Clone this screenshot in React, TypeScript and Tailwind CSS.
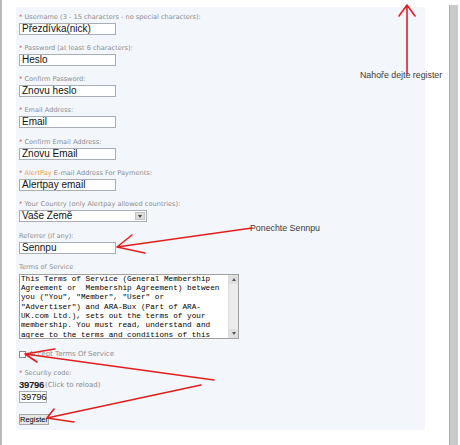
import React from "react";

const label = "font-['DejaVu_Sans',sans-serif] text-[6.6px] leading-[9px] text-[#8d8d8d] whitespace-nowrap";
const input =
  "mt-[1px] h-[12px] border border-[#a7aeb8] bg-white pl-[2px] font-['Liberation_Sans',Arial,sans-serif] text-[10px] leading-[10px] text-[#111] whitespace-nowrap overflow-hidden";

function Star() {
  return <span className="text-[#c65b5b]">* </span>;
}

function Field({ title, value, req = true }: { title: React.ReactNode; value: string; req?: boolean }) {
  return (
    <div className="mb-[9.3px]">
      <div className={label}>
        {req && <Star />}
        {title}
      </div>
      <div className={input + " w-[97px]"}>{value}</div>
    </div>
  );
}

const terms = [
  "This Terms of Service (General Membership",
  "Agreement or  Membership Agreement) between",
  'you ("You", "Member", "User" or',
  '"Advertiser") and ARA-Bux (Part of ARA-',
  "UK.com Ltd.), sets out the terms of your",
  "membership. You must read, understand and",
  "agree to the terms and conditions of this",
];

function App() {
  return (
    <div className="relative w-[460px] h-[445px] bg-white overflow-hidden flex items-start border-l-2 border-[#bababa]">
      <div className="mt-[7px] ml-[14px] w-[409px] h-[423px] bg-[#f3f6fb] pl-[3px] pt-[5.5px]">
        <Field title="Username (3 - 15 characters - no special characters):" value="Přezdívka(nick)" />
        <Field title="Password (at least 6 characters):" value="Heslo" />
        <Field title="Confirm Password:" value="Znovu heslo" />
        <Field title="Email Address:" value="Email" />
        <Field title="Confirm Email Address:" value="Znovu Email" />
        <Field
          title={
            <>
              <span className="text-[#eea444]">AlertPay</span> E-mail Address For Payments:
            </>
          }
          value="Alertpay email"
        />
        <div className="mb-[9.3px]">
          <div className={label}>
            <Star />
            Your Country (only Alertpay allowed countries):
          </div>
          <div className="mt-[1px] h-[12px] w-[128px] flex border border-[#a7aeb8] bg-white">
            <div className="flex-1 pl-[2px] font-['Liberation_Sans',Arial,sans-serif] text-[10px] leading-[10px] text-[#111]">
              Vaše Země
            </div>
            <div className="w-[10px] m-[1px] bg-[#dcdcdc] border border-[#c4c4c4] flex items-center justify-center">
              <div className="w-0 h-0 border-l-[2px] border-r-[2px] border-t-[3px] border-l-transparent border-r-transparent border-t-[#444]" />
            </div>
          </div>
        </div>
        <Field title="Referrer (if any):" value="Sennpu" req={false} />
        <div className={label}>Terms of Service</div>
        <div className="mt-[2px] w-[220px] h-[65px] flex border border-[#a0a0a0] bg-white">
          <div className="flex-1 overflow-hidden pl-[1px] font-['Liberation_Mono','Courier_New',monospace] text-[7.7px] leading-[9.3px] text-black whitespace-pre">
            {terms.map((t) => (
              <div key={t}>{t}</div>
            ))}
          </div>
          <div className="w-[10px] bg-[#ececec] border-l border-[#dcdcdc] flex flex-col justify-between">
            <div className="h-[9px] bg-[#e0e0e0] flex items-center justify-center">
              <div className="w-0 h-0 border-l-[2px] border-r-[2px] border-b-[3px] border-l-transparent border-r-transparent border-b-[#555]" />
            </div>
            <div className="h-[9px] bg-[#e0e0e0] flex items-center justify-center">
              <div className="w-0 h-0 border-l-[2px] border-r-[2px] border-t-[3px] border-l-transparent border-r-transparent border-t-[#555]" />
            </div>
          </div>
        </div>
        <div className="mt-[11.5px] h-[9px] flex items-center gap-[3px]">
          <div className="w-[7px] h-[7px] border border-[#8a8a8a] bg-white" />
          <span className={label + " text-[7px]"}>Accept Terms Of Service</span>
        </div>
        <div className={label + " mt-[10px]"}>
          <Star />
          Security code:
        </div>
        <div className="mt-[1.5px] h-[10px] flex items-end gap-[1px]">
          <span className="font-['Liberation_Sans',Arial,sans-serif] font-bold text-[9.5px] leading-[10px] text-[#222] tracking-[-0.3px]">
            39796
          </span>
          <span className={label + " text-[7px]"}>(Click to reload)</span>
        </div>
        <div className="mt-[1px] h-[12px] w-[28px] border border-[#a7aeb8] bg-white pl-[1px] font-['Liberation_Sans',Arial,sans-serif] text-[9.5px] leading-[10px] text-[#111] whitespace-nowrap tracking-[-0.2px]">
          39796
        </div>
        <div className="mt-[11px] w-[30px] h-[11px] border border-[#a8a8a8] bg-[#e6e6e6] flex items-center justify-center overflow-hidden font-['Liberation_Sans',Arial,sans-serif] text-[7.5px] leading-[9px] text-black">
          Register
        </div>
      </div>
      <div className="mt-[5px] ml-[24px] w-[9px] h-[440px] bg-[#c8cacc] border-l border-[#a9abad]" />

      <div className="absolute left-[358px] top-[70px] font-['Liberation_Sans',Arial,sans-serif] text-[8.8px] leading-[11px] text-[#3a3a3a] whitespace-nowrap">
        Nahoře dejte register
      </div>
      <div className="absolute left-[248px] top-[223px] font-['Liberation_Sans',Arial,sans-serif] text-[8.8px] leading-[11px] text-[#3a3a3a] whitespace-nowrap">
        Ponechte Sennpu
      </div>
      <svg className="absolute left-0 top-0 pointer-events-none" width="460" height="445" viewBox="0 0 460 445">
        <g stroke="#e11f1f" strokeWidth="1.6" fill="none" strokeLinecap="round">
          <path d="M405 5 L405 74 M405 5 L397 16 M405 5 L413 16" />
          <path d="M250 228 L115 247 M115 247 L130 235 M115 247 L143 253" />
          <path d="M212 380 L23 354 M23 354 L53 349 M23 354 L35 362" />
          <path d="M199 385 L45 418 M45 418 L52 409 M45 418 L72 422" />
        </g>
      </svg>
    </div>
  );
}

export default App;
